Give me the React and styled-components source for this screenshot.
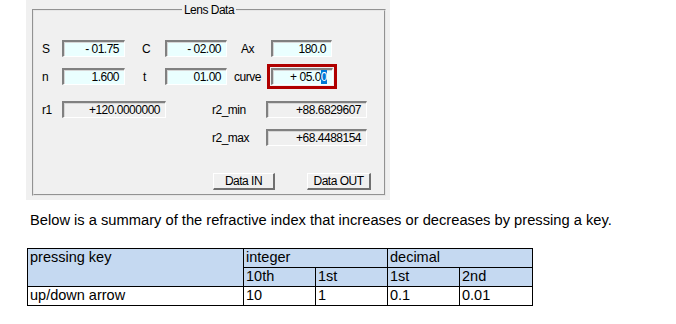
import React from 'react';
import styled, { createGlobalStyle } from 'styled-components';

const Global = createGlobalStyle`
  body {
    margin: 0;
    background: #fff;
    font-family: "Liberation Sans", Arial, sans-serif;
  }
`;

const Panel = styled.div`
  margin-left: 26px;
  width: 364px;
  height: 200px;
  background: #f0f0f0;
  padding: 4px 0 0 6px;
  box-sizing: border-box;
`;

const Group = styled.fieldset`
  margin: 0;
  width: 354px;
  height: 192px;
  box-sizing: border-box;
  border: 2px groove #e6e6e6;
  padding: 0;
  font-size: 12px;
  letter-spacing: -0.5px;
  color: #000;

  legend {
    margin: 0 auto;
    padding: 0 2px;
    font-size: 12px;
    line-height: 12px;
  }
`;

const Rows = styled.div`
  display: flex;
  flex-direction: column;
  padding-top: ${(p) => p.$top}px;
`;

const Row = styled.div`
  display: flex;
  align-items: center;
  height: ${(p) => p.$h || 17}px;
  margin-bottom: ${(p) => p.$gap || 0}px;
`;

const Label = styled.span`
  width: ${(p) => p.$w}px;
  padding-left: ${(p) => p.$pl}px;
  box-sizing: border-box;
  flex: none;
`;

const Field = styled.div`
  width: ${(p) => p.$w}px;
  height: 17px;
  box-sizing: border-box;
  flex: none;
  display: flex;
  align-items: center;
  justify-content: flex-end;
  padding-right: 5px;
  background: ${(p) => (p.$readonly ? '#f0f0f0' : '#eaffff')};
  border-style: solid;
  border-width: 2px 1px 1px 2px;
  border-color: #808080 #ffffff #ffffff #808080;
  box-shadow: inset 1px 1px 0 #d6d6d6;
  white-space: pre;
  outline: ${(p) => (p.$focus ? '3px solid #b00000' : 'none')};
  outline-offset: 1px;
`;

const Sel = styled.span`
  background: #0078d7;
  color: #fff;
`;

const Spacer = styled.span`
  width: ${(p) => p.$w}px;
  flex: none;
`;

const Button = styled.button`
  width: ${(p) => p.$w}px;
  height: 17px;
  flex: none;
  padding: 0;
  margin-right: ${(p) => p.$mr || 0}px;
  font-family: "Liberation Sans", Arial, sans-serif;
  font-size: 12px;
  letter-spacing: -0.5px;
  color: #000;
  background: #f0f0f0;
  border-style: solid;
  border-width: 1px 2px 2px 1px;
  border-color: #ffffff #707070 #707070 #ffffff;
`;

const Note = styled.p`
  margin: 12px 0 0 30px;
  font-size: 14.7px;
  line-height: 17px;
  color: #000;
`;

const Table = styled.table`
  margin: 19px 0 0 27px;
  border-collapse: collapse;
  font-size: 14.5px;
  table-layout: fixed;
  width: 505px;

  td {
    border: 1px solid #000;
    height: 18px;
    padding: 0 0 0 2px;
    line-height: 17px;
    vertical-align: top;
    overflow: hidden;
  }
`;

const Cell = styled.td`
  background: ${(p) => (p.$head ? '#c5d9f1' : '#fff')};
`;

export default function App() {
  return (
    <>
      <Global />
      <Panel>
        <Group>
          <legend>Lens Data</legend>
          <Rows $top={24}>
            <Row $gap={11}>
              <Label $w={28} $pl={8}>S</Label>
              <Field $w={63}>- 01.75</Field>
              <Label $w={40} $pl={17}>C</Label>
              <Field $w={62}>- 02.00</Field>
              <Label $w={44} $pl={14}>Ax</Label>
              <Field $w={61}>180.0</Field>
            </Row>
            <Row $gap={16}>
              <Label $w={28} $pl={8}>n</Label>
              <Field $w={63}>1.600</Field>
              <Label $w={40} $pl={18}>t</Label>
              <Field $w={62}>01.00</Field>
              <Label $w={44} $pl={7}>curve</Label>
              <Field $w={62} $focus>+ 05.0<Sel>0</Sel></Field>
            </Row>
            <Row $gap={11}>
              <Label $w={28} $pl={8}>r1</Label>
              <Field $w={104} $readonly>+120.0000000</Field>
              <Label $w={100} $pl={46}>r2_min</Label>
              <Field $w={101} $readonly>+88.6829607</Field>
            </Row>
            <Row $gap={27}>
              <Spacer $w={132} />
              <Label $w={100} $pl={46}>r2_max</Label>
              <Field $w={101} $readonly>+68.4488154</Field>
            </Row>
            <Row $h={17}>
              <Spacer $w={179} />
              <Button $w={62} $mr={32}>Data IN</Button>
              <Button $w={64}>Data OUT</Button>
            </Row>
          </Rows>
        </Group>
      </Panel>
      <Note>Below is a summary of the refractive index that increases or decreases by pressing a key.</Note>
      <Table>
        <colgroup>
          <col style={{ width: 216 }} />
          <col style={{ width: 72 }} />
          <col style={{ width: 72 }} />
          <col style={{ width: 72 }} />
          <col style={{ width: 73 }} />
        </colgroup>
        <tbody>
          <tr>
            <Cell $head rowSpan={2}>pressing key</Cell>
            <Cell $head colSpan={2}>integer</Cell>
            <Cell $head colSpan={2}>decimal</Cell>
          </tr>
          <tr>
            <Cell $head>10th</Cell>
            <Cell $head>1st</Cell>
            <Cell $head>1st</Cell>
            <Cell $head>2nd</Cell>
          </tr>
          <tr>
            <Cell>up/down arrow</Cell>
            <Cell>10</Cell>
            <Cell>1</Cell>
            <Cell>0.1</Cell>
            <Cell>0.01</Cell>
          </tr>
        </tbody>
      </Table>
    </>
  );
}
